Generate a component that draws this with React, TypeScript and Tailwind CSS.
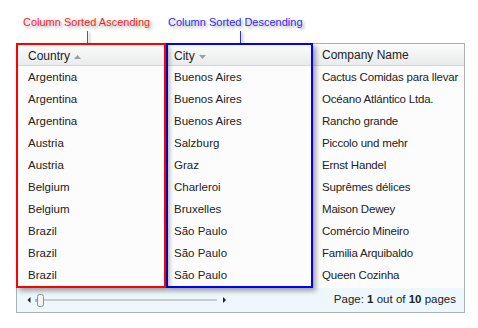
import React from "react";

const ROWS: [string, string, string][] = [
  ["Argentina", "Buenos Aires", "Cactus Comidas para llevar"],
  ["Argentina", "Buenos Aires", "Océano Atlántico Ltda."],
  ["Argentina", "Buenos Aires", "Rancho grande"],
  ["Austria", "Salzburg", "Piccolo und mehr"],
  ["Austria", "Graz", "Ernst Handel"],
  ["Belgium", "Charleroi", "Suprêmes délices"],
  ["Belgium", "Bruxelles", "Maison Dewey"],
  ["Brazil", "São Paulo", "Comércio Mineiro"],
  ["Brazil", "São Paulo", "Familia Arquibaldo"],
  ["Brazil", "São Paulo", "Queen Cozinha"],
];

const HEADER = "flex items-center pt-[1px] bg-gradient-to-b from-[#fbfbfb] to-[#eaebec] border-b border-[#d4d6d8] text-[12px] text-[#222]";
const CELL = "h-[22px] flex items-center pt-[2px] text-[11.5px] text-[#222] whitespace-nowrap overflow-hidden";
const LABEL = "whitespace-nowrap text-[11px] leading-[13px] [text-shadow:2px_2px_3px_rgba(0,0,0,0.35)]";
const LINE = "w-px h-[12px] mt-[2px] shadow-[2px_1px_3px_rgba(0,0,0,0.35)]";

const SortUp = () => (
  <svg width="7" height="4" viewBox="0 0 7 4" className="ml-[4px] mt-[2px]">
    <polygon points="0,4 7,4 3.5,0" fill="#9a9ea3" />
  </svg>
);

const SortDown = () => (
  <svg width="7" height="4" viewBox="0 0 7 4" className="ml-[4px] mt-[2px]">
    <polygon points="0,0 7,0 3.5,4" fill="#9a9ea3" />
  </svg>
);

const Pager = () => (
  <div className="h-[25px] bg-[#eef7fb] border border-t-0 border-[#a9b2ba] flex items-center pl-[10px] pr-[8px] text-[11.5px] text-[#222]">
    <svg width="200" height="16" viewBox="0 0 200 16">
      <polygon points="3.5,5 0.5,8 3.5,11" fill="#222" />
      <line x1="16" y1="8" x2="190" y2="8" stroke="#c8cccf" strokeWidth="2" />
      <rect x="10.5" y="2.5" width="6" height="12" rx="2" fill="#f4f4f4" stroke="#8a8f94" />
      <line x1="9" y1="7" x2="9" y2="10" stroke="#4a7ed8" />
      <polygon points="196,5 199,8 196,11" fill="#222" />
    </svg>
    <span className="ml-auto">
      Page: <b>1</b> out of <b>10</b> pages
    </span>
  </div>
);

export default function App() {
  return (
    <div className="w-[478px] h-[328px] bg-white pl-4 font-['Liberation_Sans',Arial,sans-serif]">
      {/* callouts above the sorted columns */}
      <div className="h-[43px] flex items-end">
        <div className="w-[150px] shrink-0 pl-[7px] flex flex-col">
          <span className={`${LABEL} text-[#ff1a1a]`}>Column Sorted Ascending</span>
          <div className={`${LINE} ml-[64px] bg-[#ff1a1a]`} />
        </div>
        <div className="w-[147px] shrink-0 pl-[2px] flex flex-col">
          <span className={`${LABEL} text-[#2a2aff]`}>Column Sorted Descending</span>
          <div className={`${LINE} ml-[72px] bg-[#2a2aff]`} />
        </div>
      </div>

      <div className="w-[449px]">
        <div className="flex">
          <div className="relative z-20 w-[150px] shrink-0 border-2 border-[#ff0000] bg-[#fcfcfc] shadow-[3px_3px_5px_rgba(0,0,0,0.35)]">
            <div className={`${HEADER} h-[21px] pl-[10px]`}>
              Country <SortUp />
            </div>
            {ROWS.map((r, i) => (
              <div key={i} className={`${CELL} pl-[10px]`}>{r[0]}</div>
            ))}
          </div>
          <div className="relative z-10 w-[147px] shrink-0 border-2 border-[#0000ff] bg-[#fcfcfc] shadow-[3px_3px_5px_rgba(0,0,0,0.35)]">
            <div className={`${HEADER} h-[21px] pl-[6px]`}>
              City <SortDown />
            </div>
            {ROWS.map((r, i) => (
              <div key={i} className={`${CELL} pl-[6px]`}>{r[1]}</div>
            ))}
          </div>
          <div className="flex-1 min-w-0 border-t border-r border-[#a9b2ba] bg-[#fcfcfc] pb-[2px]">
            <div className={`${HEADER} h-[22px] pl-[9px]`}>Company Name</div>
            {ROWS.map((r, i) => (
              <div key={i} className={`${CELL} pl-[9px] tracking-[-0.2px]`}>{r[2]}</div>
            ))}
          </div>
        </div>
        <Pager />
      </div>
    </div>
  );
}
